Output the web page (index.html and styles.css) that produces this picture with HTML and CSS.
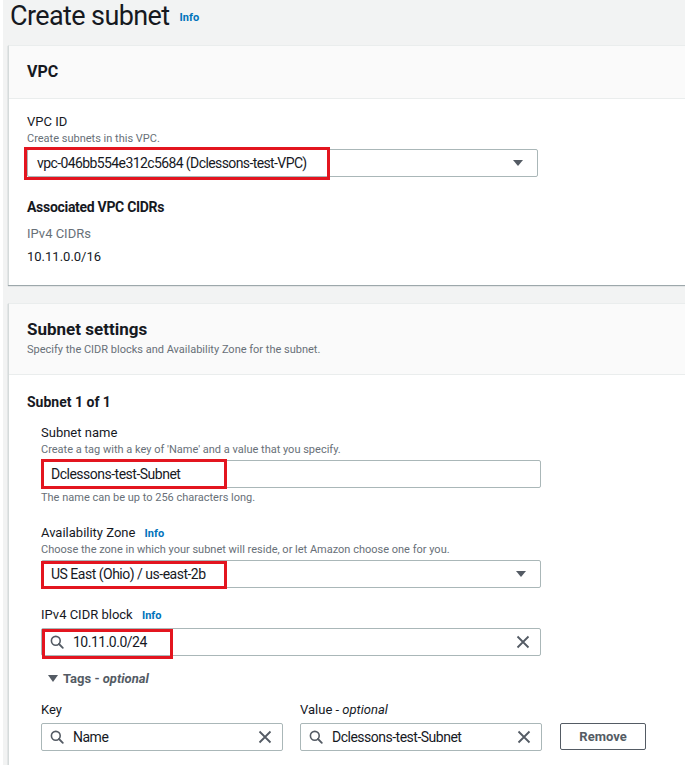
FILE: index.html
```html
<!DOCTYPE html>
<html lang="en">
<head>
<meta charset="utf-8">
<title>Create subnet</title>
<link rel="stylesheet" href="styles.css">
</head>
<body>
<div class="page">
  <div class="page-head">
    <h1 class="title">Create subnet</h1>
    <span class="info">Info</span>
  </div>

  <section class="card">
    <div class="card-head card-head-short">
      <h2 class="card-title">VPC</h2>
    </div>
    <div class="card-body vpc-body">
      <div class="field-label">VPC ID</div>
      <div class="field-desc">Create subnets in this VPC.</div>
      <div class="control select vpc-select">
        <span class="value">vpc-046bb554e312c5684 (Dclessons-test-VPC)</span>
        <svg class="caret" viewBox="0 0 12 8" width="12" height="8"><path d="M1 1h10L6 7z" fill="#545b64"/></svg>
        <span class="mark mark-vpc"></span>
      </div>
      <h3 class="sub-title assoc">Associated VPC CIDRs</h3>
      <div class="kv-key">IPv4 CIDRs</div>
      <div class="kv-val">10.11.0.0/16</div>
    </div>
  </section>

  <section class="card card-second">
    <div class="card-head">
      <h2 class="card-title card-title-lg">Subnet settings</h2>
      <p class="card-desc">Specify the CIDR blocks and Availability Zone for the subnet.</p>
    </div>
    <div class="card-body subnet-body">
      <h3 class="sub-title">Subnet 1 of 1</h3>
      <div class="fields">
        <div class="field-label mt-12">Subnet name</div>
        <div class="field-desc">Create a tag with a key of 'Name' and a value that you specify.</div>
        <div class="control input">
          <span class="value">Dclessons-test-Subnet</span>
          <span class="mark mark-name"></span>
        </div>
        <div class="field-hint">The name can be up to 256 characters long.</div>

        <div class="field-label mt-19">Availability Zone <span class="info info-inline">Info</span></div>
        <div class="field-desc">Choose the zone in which your subnet will reside, or let Amazon choose one for you.</div>
        <div class="control select az-select">
          <span class="value">US East (Ohio) / us-east-2b</span>
          <svg class="caret" viewBox="0 0 12 8" width="12" height="8"><path d="M1 1h10L6 7z" fill="#545b64"/></svg>
          <span class="mark mark-az"></span>
        </div>

        <div class="field-label mt-18">IPv4 CIDR block <span class="info info-inline">Info</span></div>
        <div class="control input search cidr">
          <svg class="search-icon" viewBox="0 0 14 14" width="14" height="14"><circle cx="5.8" cy="5.8" r="4.4" fill="none" stroke="#545b64" stroke-width="1.6"/><path d="M9 9l3.8 3.8" stroke="#545b64" stroke-width="1.8" stroke-linecap="round"/></svg>
          <span class="value">10.11.0.0/24</span>
          <svg class="clear" viewBox="0 0 14 14" width="14" height="14"><path d="M1.5 1.5l11 11M12.5 1.5l-11 11" stroke="#545b64" stroke-width="1.8"/></svg>
          <span class="mark mark-cidr"></span>
        </div>

        <div class="expander">
          <svg class="exp-caret" viewBox="0 0 10 7" width="10" height="7"><path d="M0 0h10L5 7z" fill="#545b64"/></svg>
          <span class="exp-label">Tags - <i>optional</i></span>
        </div>

        <div class="tags-grid">
          <div class="tag-col">
            <div class="field-label">Key</div>
            <div class="control input search">
              <svg class="search-icon" viewBox="0 0 14 14" width="14" height="14"><circle cx="5.8" cy="5.8" r="4.4" fill="none" stroke="#545b64" stroke-width="1.6"/><path d="M9 9l3.8 3.8" stroke="#545b64" stroke-width="1.8" stroke-linecap="round"/></svg>
              <span class="value">Name</span>
              <svg class="clear" viewBox="0 0 14 14" width="14" height="14"><path d="M1.5 1.5l11 11M12.5 1.5l-11 11" stroke="#545b64" stroke-width="1.8"/></svg>
            </div>
          </div>
          <div class="tag-col">
            <div class="field-label">Value - <i>optional</i></div>
            <div class="control input search">
              <svg class="search-icon" viewBox="0 0 14 14" width="14" height="14"><circle cx="5.8" cy="5.8" r="4.4" fill="none" stroke="#545b64" stroke-width="1.6"/><path d="M9 9l3.8 3.8" stroke="#545b64" stroke-width="1.8" stroke-linecap="round"/></svg>
              <span class="value">Dclessons-test-Subnet</span>
              <svg class="clear" viewBox="0 0 14 14" width="14" height="14"><path d="M1.5 1.5l11 11M12.5 1.5l-11 11" stroke="#545b64" stroke-width="1.8"/></svg>
            </div>
          </div>
          <div class="tag-action">
            <button class="btn">Remove</button>
          </div>
        </div>
      </div>
    </div>
  </section>
</div>
</body>
</html>
```

FILE: styles.css
```css
* { box-sizing: border-box; }

html, body {
  margin: 0;
  padding: 0;
  background: #ffffff;
}

body {
  font-family: Roboto, "Liberation Sans", Arial, sans-serif;
  color: #16191f;
  font-size: 14px;
  width: 685px;
  height: 780px;
  overflow: hidden;
}

.page {
  margin-left: 3px;
  height: 765px;
  overflow: hidden;
  background: #f2f3f3;
  padding-left: 5px;
}

.page-head {
  height: 45px;
  display: flex;
  align-items: center;
  gap: 10px;
  padding-left: 2px;
  padding-bottom: 13px;
}

.title {
  margin: 0;
  font-size: 27px;
  font-weight: 400;
  line-height: 32px;
  letter-spacing: -0.6px;
  color: #16191f;
}

.info {
  font-size: 11px;
  font-weight: 700;
  color: #0073bb;
}

.page-head .info {
  margin-top: 3px;
}

.card {
  background: #ffffff;
  border-top: 1px solid #eaeded;
  border-left: 1px solid #d5dbdb;
  box-shadow: 0 1px 1px 0 rgba(0, 28, 36, 0.35);
}

.card-second {
  margin-top: 18px;
}

.card-head {
  background: #fafafa;
  border-bottom: 1px solid #eaeded;
  padding: 14px 18px 16px;
}

.card-head-short {
  height: 53px;
  padding: 0 18px;
  display: flex;
  align-items: center;
}

.card-title {
  margin: 0;
  font-size: 16px;
  line-height: 22px;
  font-weight: 700;
}

.card-title-lg {
  font-size: 17px;
}

.card-desc {
  margin: 2px 0 0;
  font-size: 11px;
  line-height: 16px;
  color: #687078;
}

.card-body {
  padding: 14px 18px 18px;
}

.subnet-body {
  padding-top: 17px;
  height: 400px;
}

.field-label {
  font-size: 13px;
  line-height: 18px;
}

.field-desc,
.field-hint {
  font-size: 11px;
  line-height: 15px;
  color: #687078;
}

.field-hint {
  margin-top: 2px;
}

.info-inline {
  margin-left: 6px;
  line-height: 1;
}

.mt-12 { margin-top: 12px; }
.mt-18 { margin-top: 18px; }
.mt-19 { margin-top: 19px; }

.control {
  position: relative;
  display: flex;
  align-items: center;
  height: 28px;
  border: 1px solid #aab7b8;
  border-radius: 2px;
  background: #fff;
  padding: 0 9px;
  margin-top: 3px;
  font-size: 14px;
}

.control .value {
  flex: 1;
  white-space: nowrap;
  letter-spacing: -0.5px;
}

.vpc-select {
  width: 511px;
}

.vpc-select .value {
  letter-spacing: -0.6px;
}

.fields {
  padding-left: 14px;
}

.fields .control {
  width: 500px;
  margin-top: 4px;
}

.fields .field-desc + .control {
  margin-top: 3px;
}

.fields .az-select {
  margin-top: 2px;
}

.caret {
  margin-right: 4px;
}

.search-icon {
  margin-right: 9px;
  margin-left: -1px;
}

.clear {
  margin-right: 1px;
}

.mark {
  position: absolute;
  border: 3px solid #e3151f;
  pointer-events: none;
}

.mark-vpc {
  left: -4px;
  top: -3px;
  width: 306px;
  height: 33px;
}

.mark-name {
  left: -1px;
  top: -2px;
  width: 186px;
  height: 30px;
}

.mark-az {
  left: -1px;
  top: 0;
  width: 186px;
  height: 28px;
}

.mark-cidr {
  left: 0;
  top: 0;
  width: 131px;
  height: 30px;
}

.sub-title {
  margin: 0;
  font-size: 14px;
  line-height: 20px;
  font-weight: 700;
}

.assoc {
  margin-top: 20px;
  letter-spacing: -0.3px;
}

.kv-key {
  margin-top: 7px;
  font-size: 13px;
  line-height: 20px;
  color: #687078;
}

.kv-val {
  margin-top: 3px;
  font-size: 13px;
  line-height: 20px;
}

.expander {
  margin-top: 12px;
  display: flex;
  align-items: center;
  height: 20px;
  padding-left: 7px;
  gap: 5px;
  color: #545b64;
}

.exp-label {
  font-weight: 700;
  font-size: 13px;
}

.tags-grid {
  margin-top: 13px;
  display: flex;
  align-items: flex-end;
}

.tag-col + .tag-col {
  margin-left: 17px;
}

.tags-grid .control {
  width: 242px;
  margin-top: 4px;
}

.tag-action {
  margin-left: 18px;
}

.btn {
  height: 27px;
  width: 86px;
  border: 1px solid #545b64;
  border-radius: 2px;
  background: #fff;
  color: #545b64;
  font-family: inherit;
  font-size: 13px;
  font-weight: 700;
  padding: 0;
  margin-bottom: 1px;
}
```
